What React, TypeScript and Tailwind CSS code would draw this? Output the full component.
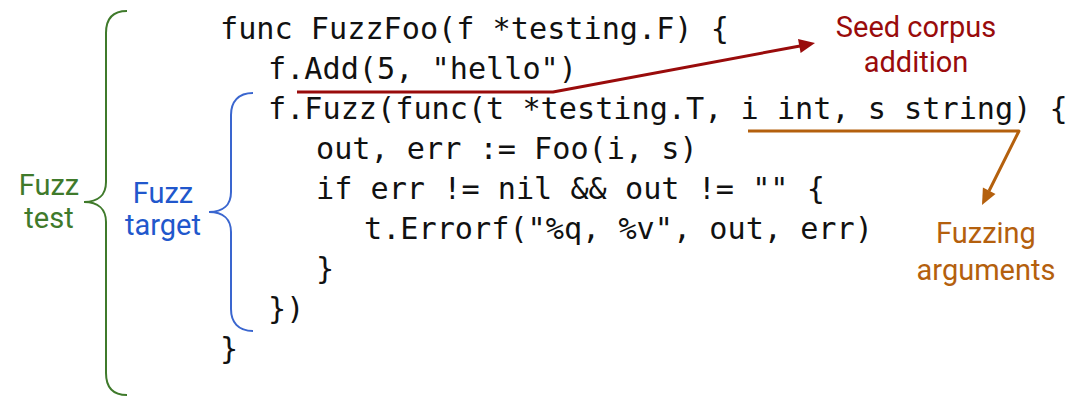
const topLines = ['func FuzzFoo(f *testing.F) {', 'f.Add(5, "hello")'];

const innerLines: { indent: number; text: string }[] = [
  { indent: 0, text: 'f.Fuzz(func(t *testing.T, i int, s string) {' },
  { indent: 1, text: 'out, err := Foo(i, s)' },
  { indent: 1, text: 'if err != nil && out != "" {' },
  { indent: 2, text: 't.Errorf("%q, %v", out, err)' },
  { indent: 1, text: '}' },
  { indent: 0, text: '})' },
];

const indentClass = ['pl-0', 'pl-[48px]', 'pl-[96px]'];

function Arrows() {
  return (
    <svg
      className="absolute inset-0 pointer-events-none"
      width="1090"
      height="408"
      viewBox="0 0 1090 408"
      fill="none"
    >
      {/* seed corpus arrow */}
      <path d="M297 92 L553 92 L800 46" stroke="#990b0b" strokeWidth="3" strokeLinejoin="round" />
      <polygon points="815,43 800.6,53 798,39" fill="#990b0b" />
      {/* fuzzing args arrow */}
      <path d="M748 131 L1019 131 L989 191" stroke="#b4600d" strokeWidth="3" strokeLinejoin="round" />
      <polygon points="982,205 995.5,194 982.9,187.6" fill="#b4600d" />
    </svg>
  );
}

export default function App() {
  return (
    <div className="relative w-[1090px] h-[408px] bg-white overflow-hidden">
      <div className="flex h-[408px]">
        {/* fuzz test label + brace */}
        <div className="w-[84px] pl-[14px] pb-[4px] flex items-center justify-center font-['Roboto',sans-serif] text-[29px] leading-[33px] text-center text-[#3f7a2b]">
          Fuzz
          <br />
          test
        </div>
        <svg width="46" height="408" viewBox="0 0 46 408" fill="none" className="shrink-0">
          <path
            d="M43 11 C28 11 22 20 22 33 L22 182 C22 195 14 202 0 202 C14 202 22 209 22 222 L22 373 C22 386 28 395 43 395"
            stroke="#3f7a2b"
            strokeWidth="2"
          />
        </svg>

        {/* code */}
        <div className="flex flex-col pt-[9px] font-['DejaVu_Sans_Mono',monospace] text-[30.2px] leading-[40px] text-[#111] whitespace-pre">
          <div className="pl-[90px]">{topLines[0]}</div>
          <div className="pl-[138px]">{topLines[1]}</div>

          <div className="flex">
            <div className="w-[66px] flex items-center justify-center font-['Roboto',sans-serif] text-[29px] leading-[32px] text-center text-[#2157cc]">
              Fuzz
              <br />
              target
            </div>
            <svg width="72" height="240" viewBox="0 0 72 240" fill="none" className="shrink-0 overflow-visible">
              <path
                d="M57 4 C42 4 35 13 35 26 L35 103 C35 116 27 123 13 123 C27 123 35 130 35 143 L35 220 C35 233 42 242 57 242"
                stroke="#3a66cf"
                strokeWidth="2"
              />
            </svg>
            <div className="flex flex-col">
              {innerLines.map((l, i) => (
                <div key={i} className={indentClass[l.indent]}>
                  {l.text}
                </div>
              ))}
            </div>
          </div>

          <div className="pl-[90px]">{'}'}</div>
        </div>
      </div>

      <Arrows />

      <div className="font-['Roboto',sans-serif] text-[29px] text-center">
        <div className="absolute left-[835px] top-[10px] w-[162px] leading-[35px] text-[#990b0b]">
          Seed corpus
          <br />
          addition
        </div>
        <div className="absolute left-[911px] top-[215px] w-[150px] leading-[37px] text-[#b4600d]">
          Fuzzing
          <br />
          arguments
        </div>
      </div>
    </div>
  );
}
